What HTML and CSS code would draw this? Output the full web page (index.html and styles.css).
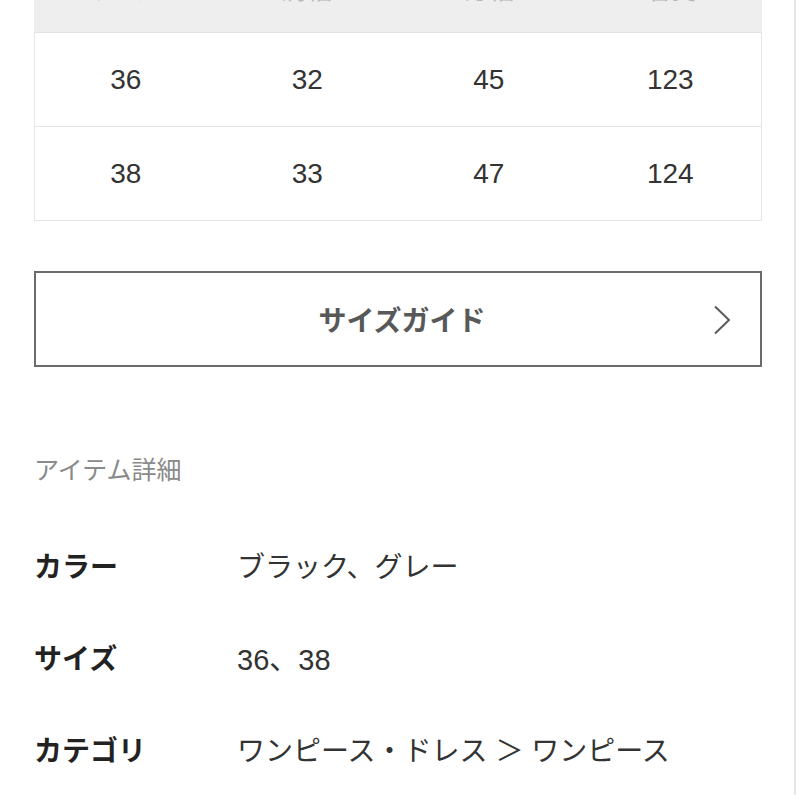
FILE: index.html
```html
<!DOCTYPE html>
<html lang="ja">
<head>
<meta charset="utf-8">
<title>サイズ・アイテム詳細</title>
<link rel="stylesheet" href="styles.css">
</head>
<body>
<div class="page">
  <div class="size-table">
    <div class="row head">
      <div class="cell">サイズ</div>
      <div class="cell">肩幅</div>
      <div class="cell">身幅</div>
      <div class="cell">着丈</div>
    </div>
    <div class="row body first">
      <div class="cell">36</div>
      <div class="cell">32</div>
      <div class="cell">45</div>
      <div class="cell">123</div>
    </div>
    <div class="row body">
      <div class="cell">38</div>
      <div class="cell">33</div>
      <div class="cell">47</div>
      <div class="cell">124</div>
    </div>
  </div>

  <div class="guide-btn">
    <span class="guide-spacer"></span>
    <span class="guide-label">サイズガイド</span>
    <span class="guide-arrow">
      <svg width="18" height="30" viewBox="0 0 18 30"><polyline points="2,1.5 16,15 2,28.5" fill="none" stroke="#5a5a5a" stroke-width="2"/></svg>
    </span>
  </div>

  <h2 class="section-title">アイテム詳細</h2>

  <dl class="details">
    <div class="detail-row"><dt>カラー</dt><dd>ブラック、グレー</dd></div>
    <div class="detail-row"><dt>サイズ</dt><dd class="num">36、38</dd></div>
    <div class="detail-row"><dt>カテゴリ</dt><dd>ワンピース・ドレス ＞ ワンピース</dd></div>
  </dl>
</div>
</body>
</html>
```

FILE: styles.css
```css
html, body {
  margin: 0;
  padding: 0;
  background: #ffffff;
}
body {
  font-family: "Liberation Sans", "Noto Sans CJK JP", sans-serif;
  color: #333333;
  overflow: hidden;
}
.page {
  width: 796px;
  min-height: 796px;
  border-right: 2px solid #e6e6e6;
  padding: 0 32px 0 34px;
  box-sizing: border-box;
}
.size-table {
  width: 728px;
  margin-top: -56px;
}
.row {
  display: grid;
  grid-template-columns: repeat(4, 1fr);
}
.cell {
  display: flex;
  align-items: center;
  justify-content: center;
}
.row.head {
  height: 88px;
  background: #eeeeee;
  color: #b8b8b8;
  font-size: 25px;
}
.row.body {
  height: 93px;
  border-left: 1px solid #e6e6e6;
  border-right: 1px solid #e6e6e6;
  border-bottom: 1px solid #e3e3e3;
  font-size: 28px;
  color: #333333;
}
.row.body.first {
  border-top: 1px solid #e2e2e2;
}
.guide-btn {
  width: 728px;
  height: 96px;
  box-sizing: border-box;
  margin-top: 50px;
  border: 2px solid #6b6b6b;
  display: grid;
  grid-template-columns: 1fr auto 1fr;
  align-items: center;
}
.guide-label {
  font-size: 28px;
  font-weight: bold;
  color: #585858;
  padding-left: 8px;
}
.guide-arrow {
  justify-self: end;
  padding-right: 29px;
  display: flex;
  padding-top: 2px;
}
.section-title {
  margin: 85px 0 0 0;
  font-size: 25px;
  line-height: 36px;
  font-weight: normal;
  color: #8a8a8a;
}
.details {
  margin: 31px 0 0 0;
  padding: 0;
}
.detail-row {
  display: grid;
  grid-template-columns: 203px 1fr;
  height: 92px;
  align-items: center;
}
.detail-row dt {
  font-size: 28px;
  font-weight: bold;
  color: #222222;
}
.detail-row dd {
  margin: 0;
  font-size: 28px;
  color: #333333;
}
.detail-row dd.num {
  font-size: 29px;
}
```
